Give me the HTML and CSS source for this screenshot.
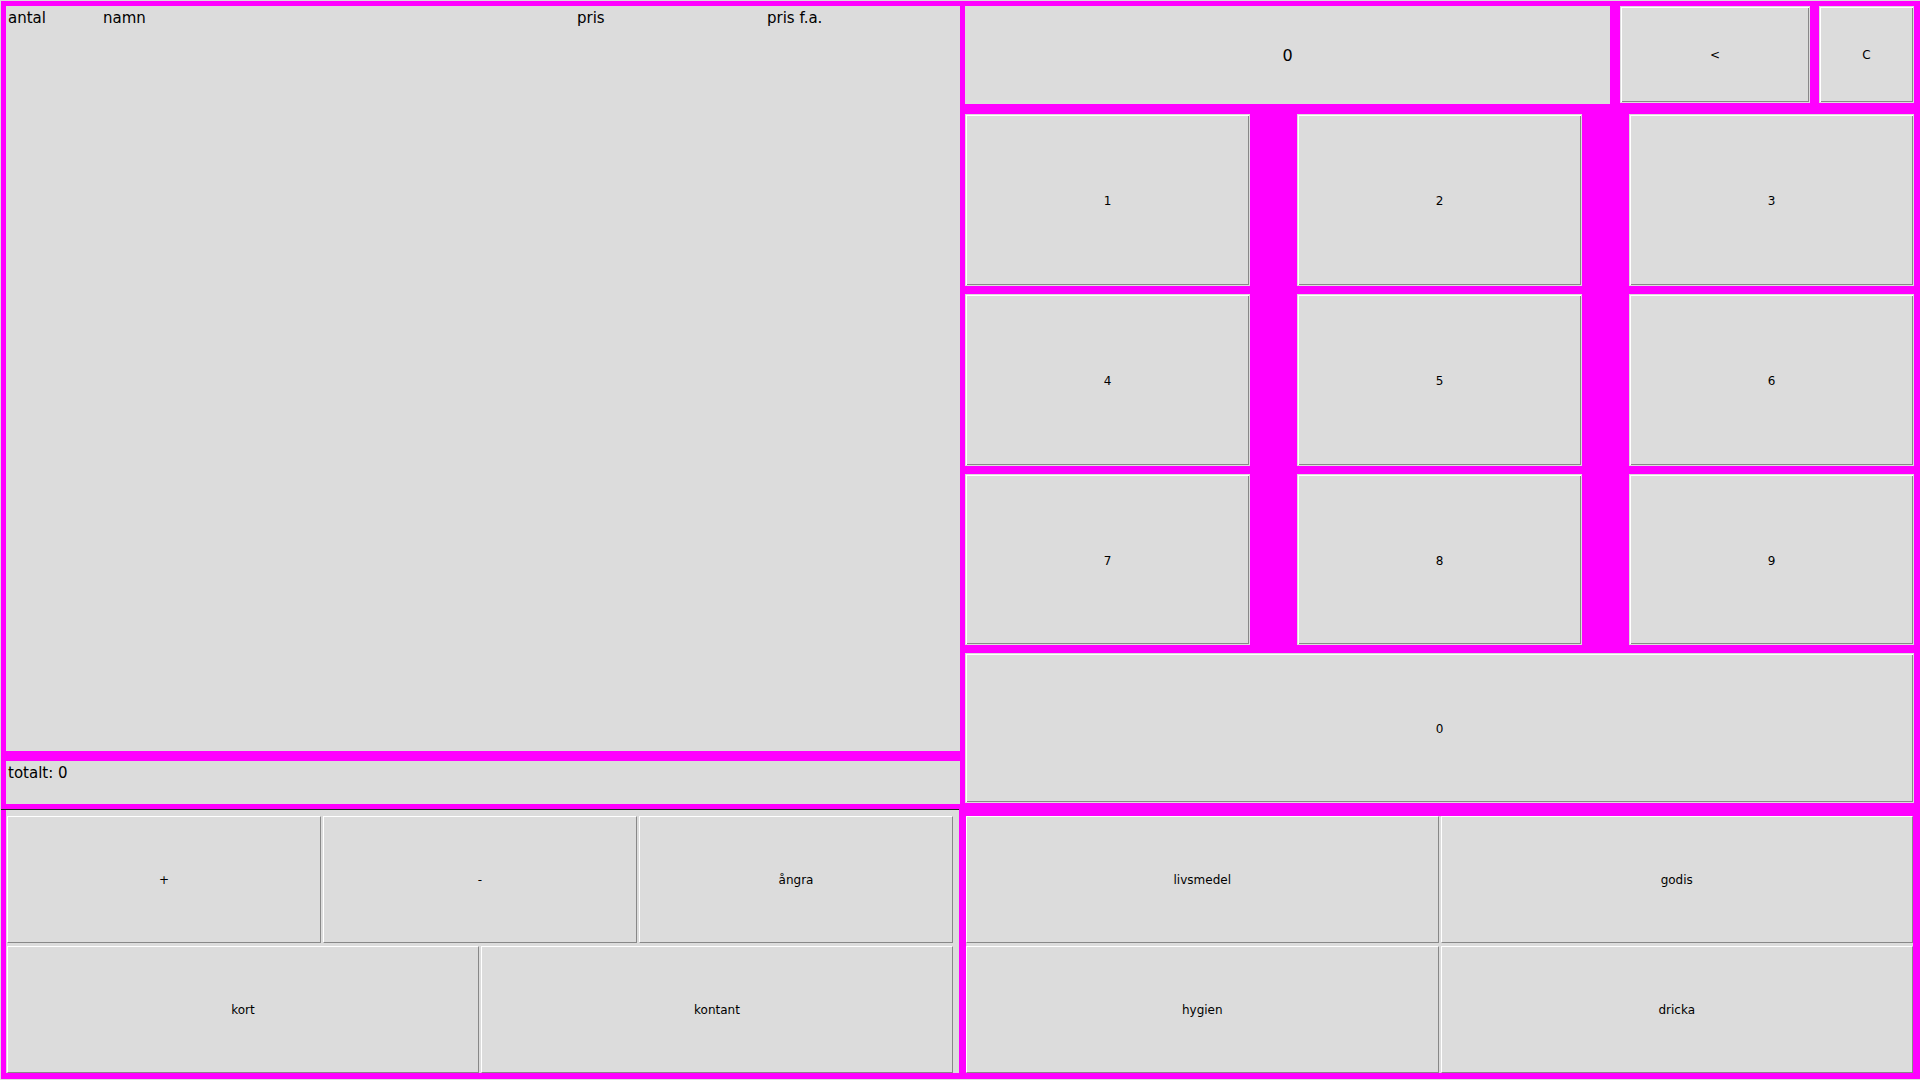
FILE: index.html
```html
<!DOCTYPE html>
<html lang="sv">
<head>
    <meta charset="UTF-8">
    <meta name="viewport" content="width=device-width, initial-scale=1.0">
    <title>Kassa</title>
    <link rel="stylesheet" href="styles.css">
</head>
<body>
    <div class="app">
        <div class="top">
            <div class="left">
                <div class="receipt">
                    <div class="receipt-head">
                        <span>antal</span>
                        <span>namn</span>
                        <span>pris</span>
                        <span>pris f.a.</span>
                    </div>
                </div>
                <div class="total">totalt: 0</div>
            </div>

            <div class="right">
                <div class="display-row">
                    <div class="display">0</div>
                    <button class="btn ring back">&lt;</button>
                    <button class="btn ring clear">C</button>
                </div>
                <div class="keypad">
                    <div class="key-row">
                        <button class="btn ring key">1</button>
                        <button class="btn ring key">2</button>
                        <button class="btn ring key">3</button>
                    </div>
                    <div class="key-row">
                        <button class="btn ring key">4</button>
                        <button class="btn ring key">5</button>
                        <button class="btn ring key">6</button>
                    </div>
                    <div class="key-row row-3">
                        <button class="btn ring key">7</button>
                        <button class="btn ring key">8</button>
                        <button class="btn ring key">9</button>
                    </div>
                    <div class="key-row row-0">
                        <button class="btn ring key wide">0</button>
                    </div>
                </div>
            </div>
        </div>

        <div class="bottom">
            <div class="actions-wrap">
                <div class="panel actions">
                    <div class="panel-row">
                        <button class="btn">+</button>
                        <button class="btn">-</button>
                        <button class="btn">ångra</button>
                    </div>
                    <div class="panel-row">
                        <button class="btn">kort</button>
                        <button class="btn">kontant</button>
                    </div>
                </div>
            </div>
            <div class="panel categories">
                <div class="panel-row">
                    <button class="btn">livsmedel</button>
                    <button class="btn">godis</button>
                </div>
                <div class="panel-row">
                    <button class="btn">hygien</button>
                    <button class="btn">dricka</button>
                </div>
            </div>
        </div>
    </div>
</body>
</html>
```

FILE: styles.css
```css
body {
    margin: 0;
    padding: 0;
    background-color: #dcdcdc;
    font-family: 'DejaVu Sans', 'Liberation Sans', sans-serif;
    color: #000;
    overflow: hidden;
}

.app {
    margin: 1px 0 1px 1px;
    height: 1078px;
    box-sizing: border-box;
    padding: 5px 6px 6px 5px;
    background-color: #ff00ff;
    display: flex;
    flex-direction: column;
}

.top {
    display: flex;
    height: 798px;
}

.left {
    width: 954px;
    display: flex;
    flex-direction: column;
}

.receipt {
    height: 745px;
    background-color: #dcdcdc;
    padding: 3px 0 0 2px;
    box-sizing: border-box;
}

.receipt-head {
    display: grid;
    grid-template-columns: 95px 474px 190px 1fr;
    font-size: 15px;
}

.total {
    margin-top: 10px;
    height: 43px;
    box-sizing: border-box;
    padding: 3px 0 0 2px;
    background-color: #dcdcdc;
    font-size: 15px;
}

.right {
    margin-left: 5px;
    width: 949px;
    display: flex;
    flex-direction: column;
}

.display-row {
    display: flex;
    height: 98px;
}

.display {
    width: 645px;
    background-color: #dcdcdc;
    display: flex;
    align-items: center;
    justify-content: center;
    font-size: 16px;
}

/* knappar ser ut som tk-knappar */
.btn {
    margin: 0;
    padding: 0;
    border: 1px solid;
    border-color: #ffffff #888888 #888888 #ffffff;
    background-color: #dcdcdc;
    font-family: 'DejaVu Sans', 'Liberation Sans', sans-serif;
    font-size: 12px;
    color: #000;
    cursor: pointer;
}

/* knappar direkt på magenta har en ljus kant runt */
.btn.ring {
    border: 1px solid #dcdcdc;
    box-shadow: inset 1px 1px 0 #ffffff, inset -1px -1px 0 #888888;
}

.back {
    margin-left: 10px;
    width: 190px;
    height: 97px;
}

.clear {
    margin-left: 9px;
    width: 95px;
    height: 97px;
}

.keypad {
    margin-top: 10px;
    display: flex;
    flex-direction: column;
    gap: 8px;
}

.key-row {
    display: flex;
    justify-content: space-between;
    height: 172px;
}

.key-row.row-3 {
    height: 171px;
}

.key-row.row-0 {
    height: 150px;
}

.key {
    width: 285px;
    padding-top: 2px;
}

.key.wide {
    width: 100%;
}

.bottom {
    display: flex;
    height: 269px;
}

.actions-wrap {
    margin-left: -5px;
    margin-top: 5px;
    width: 958px;
    padding-left: 5px;
    box-sizing: border-box;
    border-top: 1px solid #222;
}

.panel {
    background-color: #dcdcdc;
    display: flex;
    flex-direction: column;
    gap: 3px;
}

.actions {
    height: 263px;
    box-sizing: border-box;
    padding: 6px 6px 0 1px;
}

.categories {
    margin-top: 12px;
    margin-left: 7px;
    width: 947px;
    height: 257px;
}

.panel-row {
    display: flex;
    gap: 2px;
    height: 127px;
}

.panel-row .btn {
    flex: 1;
}
```
